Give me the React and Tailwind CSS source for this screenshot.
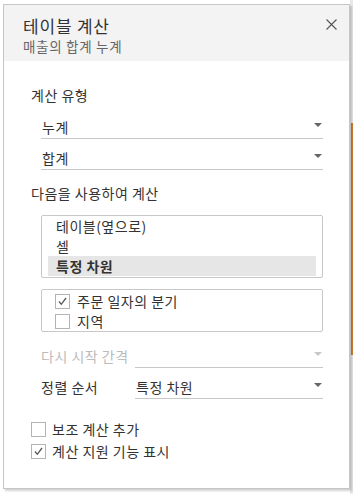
import React from 'react';

const font = { fontFamily: '"Noto Sans CJK KR", "Noto Sans", sans-serif' };

const Check = ({ checked }) => (
  <span className="w-[15px] h-[15px] border border-[#b4b4b4] bg-white flex items-center justify-center shrink-0">
    {checked && (
      <svg width="11" height="11" viewBox="0 0 11 11">
        <path d="M2 5.5 L4.3 8.3 L9 2" fill="none" stroke="#555" strokeWidth="1.3" />
      </svg>
    )}
  </span>
);

const Arrow = ({ muted }) => (
  <svg width="8" height="4" viewBox="0 0 8 4" className="mb-[11px]">
    <path d="M0 0 H8 L4 4 Z" fill={muted ? '#c8c8c8' : '#666'} />
  </svg>
);

const Dropdown = ({ value, muted }) => (
  <div className="flex items-end justify-between border-b border-[#c8c8c8] h-[31px] px-[1px]">
    <span className="leading-[20px] pb-[1px] text-[#333]">{value}</span>
    <Arrow muted={muted} />
  </div>
);

export default function App() {
  return (
    <div className="w-[353px] h-[494px] bg-white relative overflow-hidden text-[14px] tracking-[0.5px]" style={font}>
      {/* underlying page strip */}
      <div className="absolute right-0 top-0 w-[3px] h-full bg-[#e8e8e8]" />
      <div className="absolute right-0 top-[123px] w-[2px] h-[232px] bg-[#d07a2a]" />

      <div className="absolute left-[3px] top-[4px] w-[347px] h-[485px] bg-white border border-[#c6c6c6] shadow-[2px_2px_2px_rgba(0,0,0,0.18)] flex flex-col">
        {/* Header */}
        <div className="bg-[#f3f3f3] h-[56px] flex justify-between pl-[19px] pr-[12px] pt-[9px]">
          <div>
            <div className="text-[17px] tracking-[0.8px] leading-[24px] text-[#333]">테이블 계산</div>
            <div className="text-[13.5px] tracking-[0.7px] leading-[18px] text-[#666] -mt-[1px]">매출의 합계 누계</div>
          </div>
          <svg width="11" height="11" viewBox="0 0 11 11" className="mt-[5px]">
            <path d="M0.5 0.5 L10.5 10.5 M10.5 0.5 L0.5 10.5" stroke="#555" strokeWidth="1.1" />
          </svg>
        </div>

        {/* Body */}
        <div className="pl-[27px] pr-[26px] pt-[24px] text-[#333]">
          <div className="leading-[20px]">계산 유형</div>
          <div className="pl-[10px] mt-[3px]">
            <Dropdown value="누계" />
            <Dropdown value="합계" />
          </div>

          <div className="leading-[20px] mt-[13px]">다음을 사용하여 계산</div>
          <div className="ml-[10px] mt-[12px] border border-[#c8c8c8] rounded-[2px] h-[63px] px-[6px]">
            <div className="leading-[20px] pl-[8px] h-[20px]">테이블(옆으로)</div>
            <div className="leading-[20px] pl-[8px] h-[20px]">셀</div>
            <div className="leading-[20px] pl-[8px] h-[20px] bg-[#e6e6e6] font-bold">특정 차원</div>
          </div>

          <div className="ml-[10px] mt-[11px] border border-[#c8c8c8] rounded-[2px] h-[43px] pt-[3px] pl-[13px] flex flex-col gap-[4px]">
            <label className="flex items-center gap-[7px] h-[16px] leading-[16px]">
              <Check checked />
              <span>주문 일자의 분기</span>
            </label>
            <label className="flex items-center gap-[7px] h-[16px] leading-[16px]">
              <Check />
              <span>지역</span>
            </label>
          </div>

          <div className="ml-[10px] mt-[5px] flex items-end">
            <span className="w-[94px] text-[#bbb] pb-[2px] leading-[20px]">다시 시작 간격</span>
            <div className="flex-1">
              <Dropdown value="" muted />
            </div>
          </div>
          <div className="ml-[10px] flex items-end">
            <span className="w-[94px] pb-[2px] leading-[20px]">정렬 순서</span>
            <div className="flex-1">
              <Dropdown value="특정 차원" />
            </div>
          </div>

          <div className="mt-[23px] flex flex-col gap-[7px]">
            <label className="flex items-center gap-[6px] h-[15px] leading-[15px]">
              <Check />
              <span>보조 계산 추가</span>
            </label>
            <label className="flex items-center gap-[6px] h-[15px] leading-[15px]">
              <Check checked />
              <span>계산 지원 기능 표시</span>
            </label>
          </div>
        </div>
      </div>
    </div>
  );
}
